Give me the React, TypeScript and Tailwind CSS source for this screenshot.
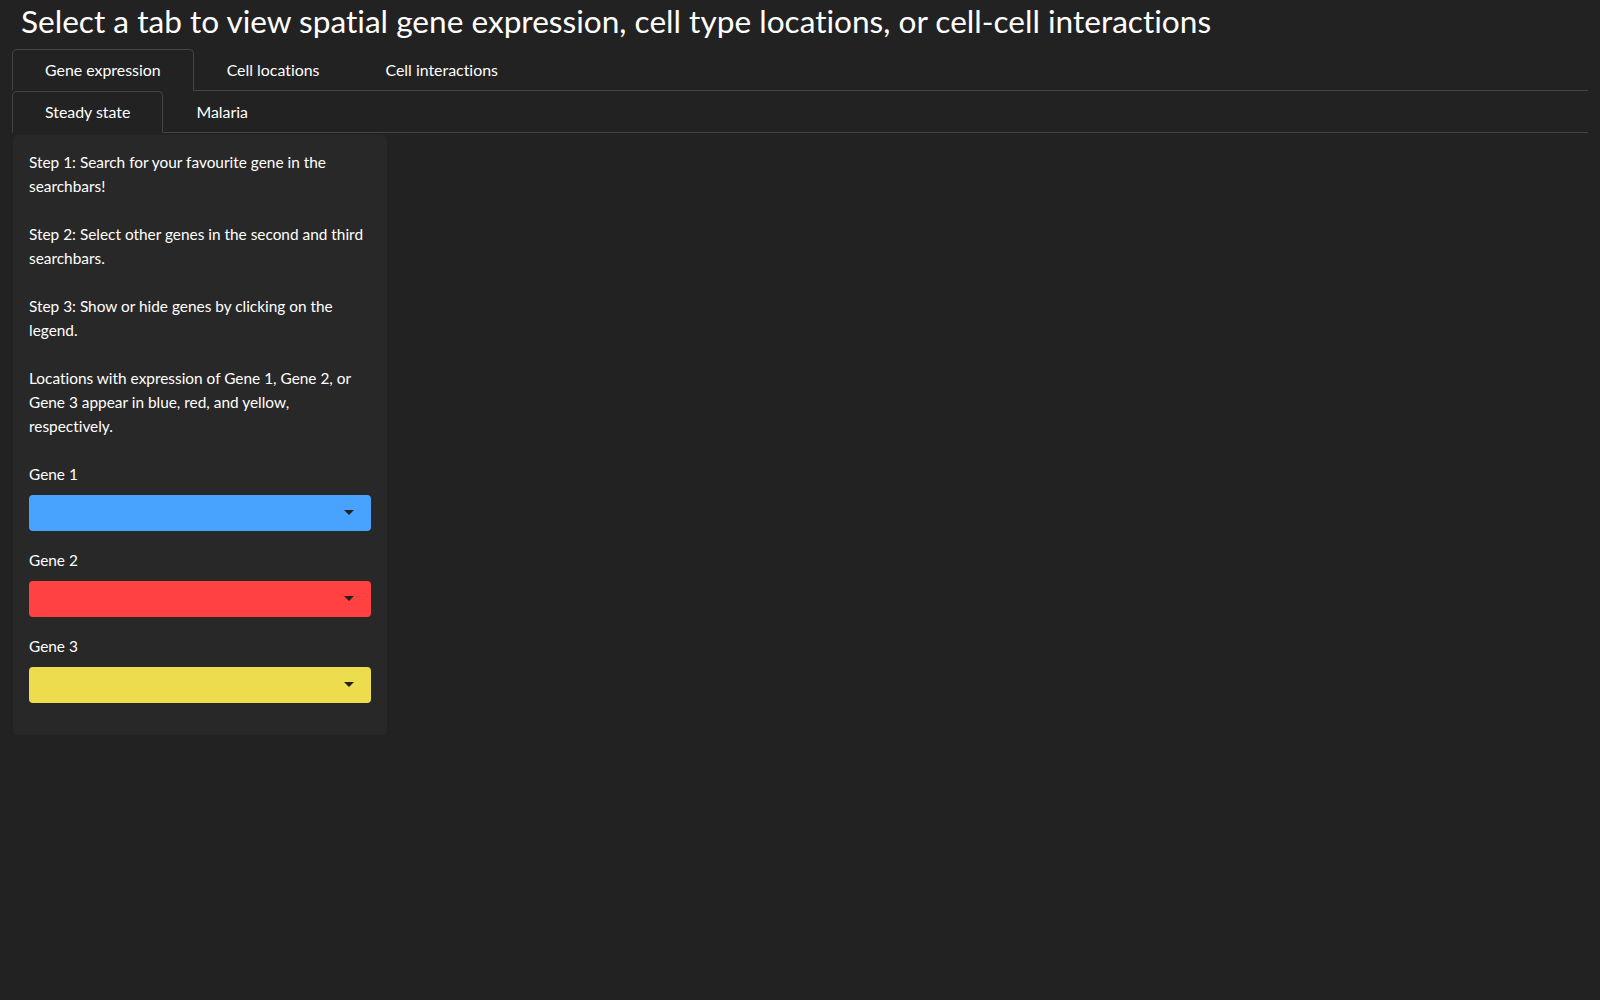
import { useState } from "react";

const mainTabs = ["Gene expression", "Cell locations", "Cell interactions"];
const subTabs = ["Steady state", "Malaria"];

const genes = [
  { label: "Gene 1", bg: "bg-[#48a2ff]" },
  { label: "Gene 2", bg: "bg-[#ff4141]" },
  { label: "Gene 3", bg: "bg-[#eddc4e]" },
];

function TabBar({ tabs, active, onSelect }: { tabs: string[]; active: number; onSelect: (i: number) => void }) {
  return (
    <div className="flex border-b border-[#444444]">
      {tabs.map((t, i) => (
        <button
          key={t}
          onClick={() => onSelect(i)}
          className={
            i === active
              ? "-mb-px rounded-t-[5px] border border-[#444444] border-b-[#222222] bg-[#222222] px-8 py-2 text-[15.9px] leading-6 text-white"
              : "-mb-px border border-transparent px-8 py-2 text-[15.9px] leading-6 text-white"
          }
        >
          {t}
        </button>
      ))}
    </div>
  );
}

function Caret() {
  return (
    <svg width="10" height="5" viewBox="0 0 10 5" className="shrink-0">
      <path d="M0 0h10L5 5z" fill="#222222" />
    </svg>
  );
}

export default function App() {
  const [tab, setTab] = useState(0);
  const [sub, setSub] = useState(0);

  return (
    <div className="min-h-screen bg-[#222222] px-3 font-['Lato','Open_Sans',sans-serif] text-[15.4px] text-white [font-variant-ligatures:none]">
      <h2 className="pl-[9px] pt-[3px] pb-[8px] text-[31.6px] leading-[1.2] font-normal">
        Select a tab to view spatial gene expression, cell type locations, or cell-cell interactions
      </h2>

      <TabBar tabs={mainTabs} active={tab} onSelect={setTab} />
      <TabBar tabs={subTabs} active={sub} onSelect={setSub} />

      <div className="mt-[2px] ml-px w-[374px] rounded-[5px] bg-[#282828] px-4 pt-[15px] pb-4">
        <div className="space-y-6 leading-6">
          <p>Step 1: Search for your favourite gene in the searchbars!</p>
          <p>Step 2: Select other genes in the second and third searchbars.</p>
          <p>Step 3: Show or hide genes by clicking on the legend.</p>
          <p>Locations with expression of Gene 1, Gene 2, or Gene 3 appear in blue, red, and yellow, respectively.</p>
        </div>

        <div className="mt-6 flex flex-col gap-[17px]">
          {genes.map((g) => (
            <div key={g.label}>
              <label className="mb-[9px] block leading-6">{g.label}</label>
              <div className={`flex h-9 items-center justify-end rounded-[4px] pr-[17px] ${g.bg}`}>
                <Caret />
              </div>
            </div>
          ))}
        </div>
        <div className="h-[16px]" />
      </div>
    </div>
  );
}
